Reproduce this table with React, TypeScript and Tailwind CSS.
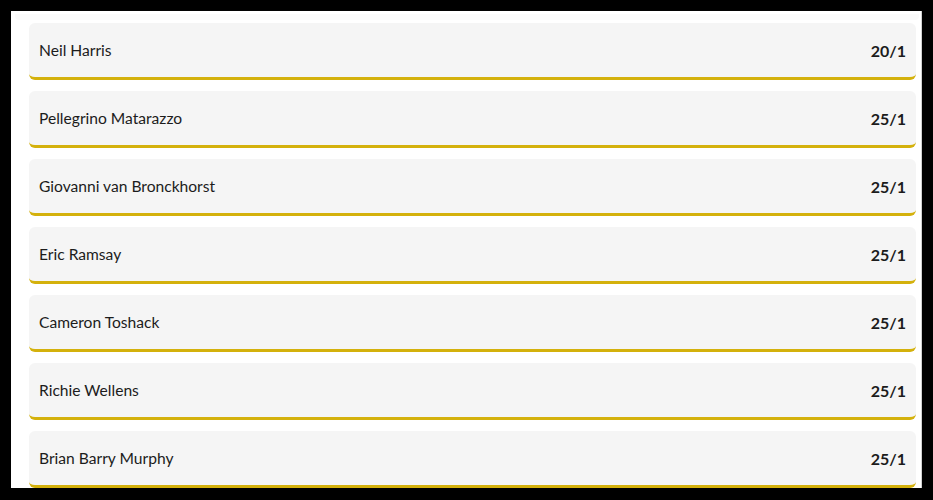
const ROWS = [
  { name: "Neil Harris", odds: "20/1" },
  { name: "Pellegrino Matarazzo", odds: "25/1" },
  { name: "Giovanni van Bronckhorst", odds: "25/1" },
  { name: "Eric Ramsay", odds: "25/1" },
  { name: "Cameron Toshack", odds: "25/1" },
  { name: "Richie Wellens", odds: "25/1" },
  { name: "Brian Barry Murphy", odds: "25/1" },
];

export default function App() {
  return (
    <div className="h-[500px] w-[933px] overflow-hidden bg-black pt-[11px] pl-[11px] pr-[11px] pb-[12px]">
      <div className="h-full overflow-hidden border-r border-[#d0d0d0] bg-white">
        {/* faint strip left over from the element above */}
        <div className="mt-[3px] ml-[4px] mr-[2px] h-[6px] rounded-b bg-[#fafafa]" />
        <div
          className="flex flex-col gap-[11px] pt-[3px] pl-[18px] pr-[5px]"
          style={{ fontFamily: "Lato, 'Noto Sans', sans-serif" }}
        >
          {ROWS.map((r) => (
            <div
              key={r.name}
              className="flex h-[57px] shrink-0 items-center justify-between rounded-md border-b-[3px] border-[#d4b10c] bg-[#f5f5f5] pt-[2px] pl-[10px] pr-[10px]"
            >
              <span className="text-[15.6px] text-[#1c1c1c]">{r.name}</span>
              <span className="text-[16px] font-bold text-[#1c1c1c]">{r.odds}</span>
            </div>
          ))}
        </div>
      </div>
    </div>
  );
}
